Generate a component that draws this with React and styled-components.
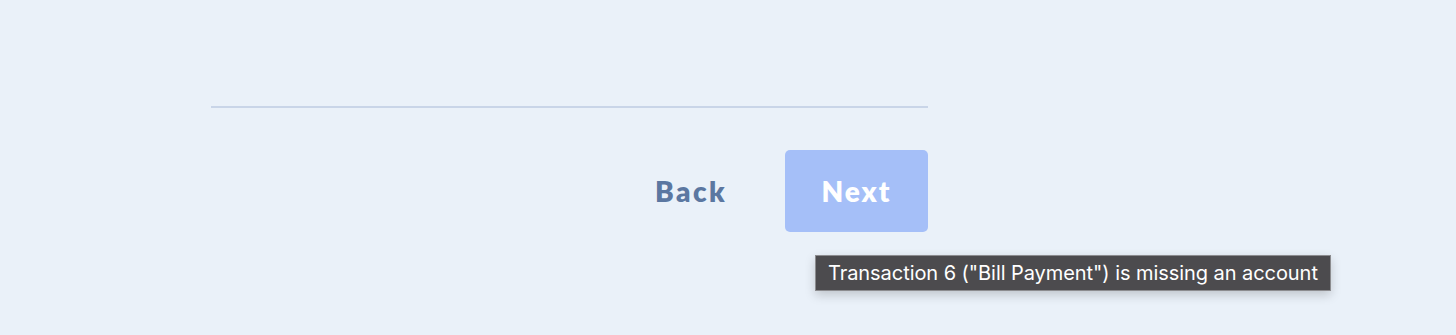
import React from 'react';
import styled, { createGlobalStyle } from 'styled-components';

const GlobalStyle = createGlobalStyle`
  html, body {
    margin: 0;
    padding: 0;
    background: #eaf1f9;
  }
`;

const Page = styled.div`
  width: 1456px;
  height: 335px;
  background: #eaf1f9;
  padding: 106px 0 0 211px;
  box-sizing: border-box;
  font-family: Lato, "Noto Sans", sans-serif;
`;

const Column = styled.div`
  width: 717px;
`;

const Divider = styled.hr`
  margin: 0;
  border: none;
  height: 2px;
  background: #c9d5e8;
`;

const Actions = styled.div`
  display: flex;
  justify-content: flex-end;
  align-items: center;
  gap: 58px;
  margin-top: 42px;
`;

const BackButton = styled.button`
  background: none;
  border: none;
  padding: 0;
  font-family: inherit;
  font-weight: 800;
  font-size: 28px;
  letter-spacing: 2.4px;
  color: #5b77a1;
  cursor: pointer;
`;

const NextWrap = styled.div`
  position: relative;
`;

const NextButton = styled.button`
  width: 143px;
  height: 82px;
  border: none;
  border-radius: 5px;
  background: #a5bff8;
  color: #fff;
  font-family: inherit;
  font-weight: 800;
  font-size: 28px;
  letter-spacing: 2px;
  cursor: not-allowed;
`;

const Tooltip = styled.div`
  position: absolute;
  left: 30px;
  top: 105px;
  white-space: nowrap;
  background: #4c4b4e;
  border: 1px solid #8c8c8f;
  box-shadow: 0 4px 10px rgba(0, 0, 0, 0.18);
  color: #fff;
  font-family: Inter, "Liberation Sans", sans-serif;
  font-size: 20px;
  letter-spacing: -0.06px;
  line-height: 34px;
  padding: 0 12px;
`;

export default function App() {
  return (
    <>
      <GlobalStyle />
      <Page>
        <Column>
          <Divider />
          <Actions>
            <BackButton>Back</BackButton>
            <NextWrap>
              <NextButton disabled>Next</NextButton>
              <Tooltip>Transaction 6 ("Bill Payment") is missing an account</Tooltip>
            </NextWrap>
          </Actions>
        </Column>
      </Page>
    </>
  );
}
